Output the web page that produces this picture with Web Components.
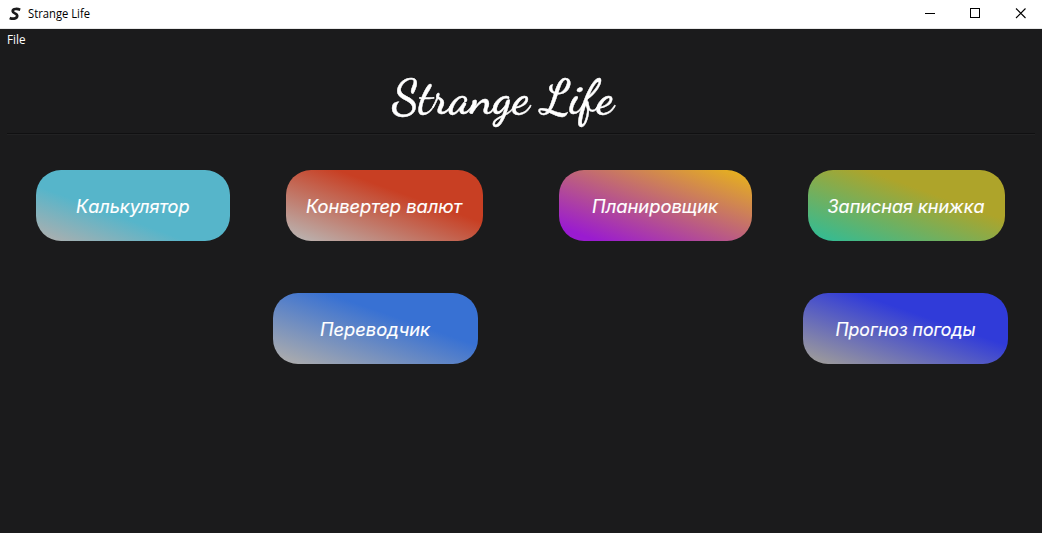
<!DOCTYPE html>
<html lang="ru">
<head>
<meta charset="utf-8">
<title>Strange Life</title>
<style>
html,body{margin:0;height:100%;background:#1b1b1c;overflow:hidden}
</style>
</head>
<body>
<app-window></app-window>
<script>
const define = (name, html, setup) => customElements.define(name, class extends HTMLElement {
  connectedCallback() {
    if (this.shadowRoot) return;
    const t = document.createElement('template');
    t.innerHTML = html;
    this.attachShadow({mode: 'open'}).append(t.content.cloneNode(true));
    if (setup) setup(this, this.shadowRoot);
  }
});

define('title-bar', `
<style>
:host{display:flex;align-items:center;height:29px;background:#fff;color:#000;font:12px/16px "Open Sans","Noto Sans",sans-serif;box-sizing:border-box;border-bottom:1px solid #e8e8e8}
.logo{width:14px;height:14px;margin:-1px 6px 0 8px;display:block}
.name{display:block;width:62px;height:16px;margin-top:-2px;overflow:visible}
.controls{margin-left:auto;display:flex}
.controls svg{width:45.5px;height:28px;display:block}
.controls svg:first-child,.controls svg:last-child{margin-left:-1px;margin-right:1px}
</style>
<svg class="logo" viewBox="0 0 14 14"><path d="M12.2 2.7C9.8 1.8 4.7 1.2 4.7 4.2C4.7 6.6 9.6 6.2 9.2 9C8.8 12.2 4.1 12 1.7 10.9" fill="none" stroke="#1b1b1c" stroke-width="2.7"/></svg>
<svg class="name"><text x="0" y="13" textLength="62" lengthAdjust="spacingAndGlyphs">Strange Life</text></svg>
<div class="controls">
<svg viewBox="0 0 45.5 28"><path d="M20 13.5h10" stroke="#000" shape-rendering="crispEdges"/></svg>
<svg viewBox="0 0 45.5 28"><rect x="19.5" y="8.5" width="9" height="9" fill="none" stroke="#000" shape-rendering="crispEdges"/></svg>
<svg viewBox="0 0 45.5 28"><path d="M20 8.5l9.5 9.5M29.5 8.5l-9.5 9.5" stroke="#000" stroke-width="1.1"/></svg>
</div>`);

define('menu-bar', `
<style>
:host{display:block;height:22px;padding-left:7px;color:#fff;font:12px "Open Sans","Noto Sans",sans-serif}
svg{display:block;height:22px;width:30px;overflow:visible}
</style>
<svg><text x="0" y="15" fill="#fff" textLength="18.5" lengthAdjust="spacingAndGlyphs"></text></svg>`,
(el, root) => { root.querySelector('text').textContent = el.getAttribute('label'); });

define('app-heading', `
<style>
:host{display:block;height:83px;margin:0 7px;box-sizing:border-box;border-bottom:1px solid #101011;box-shadow:0 1px #222223}
svg{display:block;width:223px;height:80px;margin-left:385px;overflow:visible}
text{font:600 48px "Dancing Script",cursive;fill:#fff;stroke:#fff;stroke-width:.4px}
</style>
<svg><text x="0" y="61.5" textLength="221.5" lengthAdjust="spacingAndGlyphs">Strange Life</text></svg>`);

define('gradient-button', `
<style>
:host{display:block;height:71px;border-radius:25px;
  background:linear-gradient(to top right,var(--from) var(--start,0%),var(--to) var(--stop,63%))}
svg{display:block;width:100%;height:100%}
text{font:italic 400 18px Inter,"Open Sans",sans-serif;font-feature-settings:"cv11";fill:#fff;stroke:#fff;stroke-width:.15px}
</style>
<svg><text y="43" lengthAdjust="spacingAndGlyphs"></text></svg>`,
(el, root) => {
  const t = root.querySelector('text');
  t.textContent = el.getAttribute('label');
  t.setAttribute('x', el.getAttribute('inset'));
  t.setAttribute('textLength', el.getAttribute('span'));
});

define('app-window', `
<style>
:host{display:flex;flex-direction:column;height:100vh;background:#1b1b1c}
.row{display:flex;align-items:flex-start}
.first{margin-top:36px;padding-left:36px}
.second{margin-top:52px;padding-left:273px}
</style>
<title-bar></title-bar>
<menu-bar label="File"></menu-bar>
<app-heading></app-heading>
<div class="row first">
<gradient-button label="Калькулятор" inset="40" span="113.5" style="width:194px;--from:#b4aeac;--to:#56b5ca;--stop:39%"></gradient-button>
<gradient-button label="Конвертер валют" inset="20" span="156" style="width:197px;margin-left:56px;--from:#b9bab9;--to:#c83f23"></gradient-button>
<gradient-button label="Планировщик" inset="33" span="126" style="width:193px;margin-left:76px;--from:#9a1bd0;--start:10%;--to:#e4ad22;--stop:94%"></gradient-button>
<gradient-button label="Записная книжка" inset="19.5" span="157" style="width:197px;margin-left:56px;--from:#2bbd9b;--to:#aea42a;--stop:65%"></gradient-button>
</div>
<div class="row second">
<gradient-button label="Переводчик" inset="47" span="110" style="width:205px;--from:#b4b0aa;--to:#3871d3"></gradient-button>
<gradient-button label="Прогноз погоды" inset="32.5" span="140" style="width:205px;margin-left:325px;--from:#a5a296;--to:#303bd9"></gradient-button>
</div>`);
</script>
</body>
</html>
